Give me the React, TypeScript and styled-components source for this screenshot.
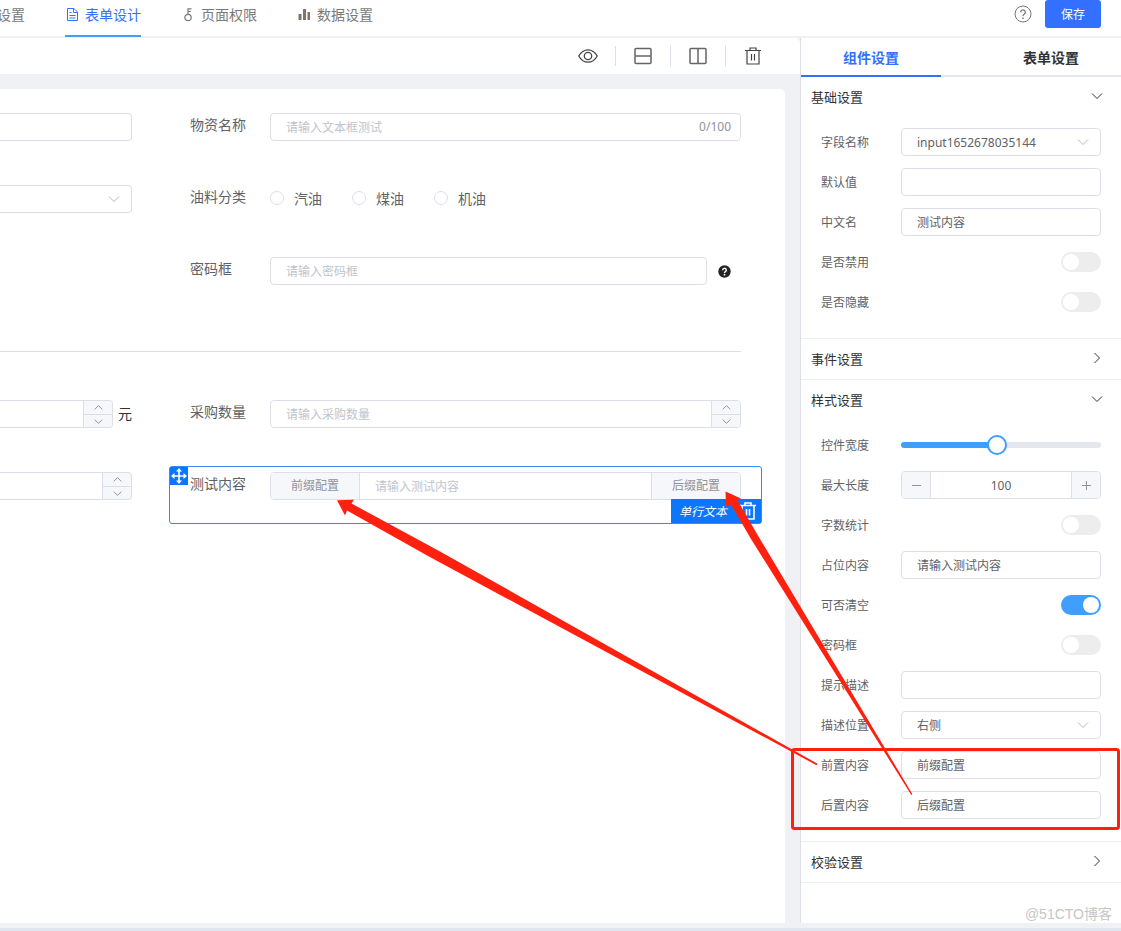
import React, { useState } from "react";
import styled, { createGlobalStyle, css } from "styled-components";

const GlobalStyle = createGlobalStyle`
  *, *::before, *::after { box-sizing: border-box; }
  body { margin: 0; background: #f0f1f5; }
  body, button, input, select {
    font-family: "Noto Sans", "Noto Sans CJK SC", sans-serif;
  }
  button { padding: 0; border: 0; background: none; cursor: pointer; }
`;

const line = "#dcdfe6";
const muted = "#909399";

const Page = styled.div`
  position: relative;
  display: flex;
  flex-direction: column;
  min-height: 100vh;
  overflow: hidden;
  color: #606266;
  font-size: 12px;
`;

/* ---------- top bar ---------- */

const TopBar = styled.header`
  display: flex;
  justify-content: space-between;
  height: 38px;
  padding-right: 20px;
  border-bottom: 2px solid #f0f1f5;
  background: #fff;
`;

const TopNav = styled.nav`
  display: flex;
  gap: 40px;
`;

const TopTab = styled.a<{ $active?: boolean; $clipped?: boolean }>`
  display: flex;
  gap: 4px;
  height: 37px;
  border-bottom: 2px solid ${(p) => (p.$active ? "#409eff" : "transparent")};
  color: ${(p) => (p.$active ? "#3370ff" : "#7a7a7a")};
  font-size: 14px;
  line-height: 30px;
  white-space: nowrap;
  text-decoration: none;
  svg { margin-top: 7px; }
  ${(p) =>
    p.$clipped &&
    css`
      justify-content: flex-end;
      width: 25px;
      overflow: hidden;
    `}
`;

const TopActions = styled.div`
  display: flex;
  gap: 13px;
`;

const HelpButton = styled.button`
  height: 28px;
  color: #777;
  svg { display: block; }
`;

const SaveButton = styled.button`
  width: 56px;
  height: 28px;
  border-radius: 3px;
  background: #3370ff;
  color: #fff;
  font-size: 12px;
`;

/* ---------- workspace ---------- */

const Workspace = styled.div`
  display: grid;
  grid-template-columns: minmax(0, 1fr) 321px;
  flex: 1;
  padding-bottom: 5px;
`;

const Main = styled.main`
  display: flex;
  flex-direction: column;
`;

const Toolbar = styled.div`
  display: flex;
  justify-content: flex-end;
  align-items: center;
  height: 36px;
  margin-bottom: 15px;
  padding-right: 20px;
  border-radius: 0 5px 0 0;
  background: #fff;
`;

const ToolButton = styled.button`
  display: flex;
  align-items: center;
  justify-content: center;
  width: 55px;
  height: 20px;
  color: #444;
  & + & { border-left: 1px solid ${line}; }
`;

const Canvas = styled.form`
  display: grid;
  grid-template-columns: 153px minmax(0, 1fr);
  column-gap: 16px;
  row-gap: 14px;
  align-content: start;
  flex: 1;
  margin-right: 15px;
  padding: 18px 23px 18px 0;
  border-radius: 0 5px 0 0;
  background: #fff;
`;

const Field = styled.div<{ $selected?: boolean; $clipped?: boolean }>`
  position: relative;
  display: flex;
  align-items: flex-start;
  height: 58px;
  padding: 5px 20px 5px ${(p) => (p.$clipped ? "0" : "20px")};
  border: 1px solid ${(p) => (p.$selected ? "#3a88ea" : "transparent")};
  border-left-width: ${(p) => (p.$clipped ? "0" : "1px")};
  border-radius: 3px;
`;

const FieldLabel = styled.label`
  flex: none;
  width: 80px;
  font-size: 14px;
  line-height: 24px;
`;

const FieldBody = styled.div`
  display: flex;
  align-items: center;
  flex: 1;
  min-width: 0;
`;

const Unit = styled.span`
  margin-left: 5px;
  color: #303133;
  font-size: 14px;
  line-height: 26px;
`;

const Hint = styled.span`
  margin: 0 10px 0 11px;
  svg { display: block; }
`;

const Divider = styled.hr`
  grid-column: 1 / -1;
  width: calc(100% - 21px);
  height: 1px;
  margin: 28px 0;
  border: 0;
  background: ${line};
`;

const Box = styled.div<{ $clipped?: boolean }>`
  display: flex;
  align-items: stretch;
  flex: 1;
  min-width: 0;
  height: 28px;
  border: 1px solid ${line};
  border-radius: 4px;
  background: #fff;
  overflow: hidden;
  ${(p) =>
    p.$clipped &&
    css`
      border-left: 0;
      border-top-left-radius: 0;
      border-bottom-left-radius: 0;
    `}
`;

const inputLook = css`
  flex: 1;
  min-width: 0;
  width: 100%;
  margin: 0;
  padding: 0 15px;
  border: 0;
  outline: 0;
  background: transparent;
  color: #606266;
  font-size: 12px;
`;

const TextInput = styled.input<{ $centered?: boolean }>`
  ${inputLook}
  text-align: ${(p) => (p.$centered ? "center" : "left")};
  &::placeholder { color: #c0c4cc; opacity: 1; }
`;

const Select = styled.select`
  ${inputLook}
  appearance: none;
`;

const SelectArrow = styled.span`
  display: flex;
  align-items: center;
  padding-right: 11px;
  color: #b4b8c0;
  pointer-events: none;
`;

const Counter = styled.span`
  padding-right: 9px;
  color: ${muted};
  line-height: 26px;
`;

const Addon = styled.span<{ $end?: boolean }>`
  padding: 0 20px;
  background: #f5f7fa;
  color: ${muted};
  line-height: 26px;
  white-space: nowrap;
  ${(p) => (p.$end ? "border-left" : "border-right")}: 1px solid ${line};
`;

const Spin = styled.div`
  display: grid;
  grid-template-rows: 1fr 1fr;
  flex: none;
  width: 29px;
  border-left: 1px solid ${line};
`;

const SpinButton = styled.button`
  display: flex;
  align-items: center;
  justify-content: center;
  background: #f5f7fa;
  color: ${muted};
  & + & { border-top: 1px solid ${line}; }
`;

const RadioGroup = styled.div`
  display: flex;
  gap: 30px;
  height: 26px;
`;

const RadioLabel = styled.label`
  display: flex;
  align-items: center;
  gap: 10px;
  font-size: 14px;
`;

const Radio = styled.input`
  appearance: none;
  width: 14px;
  height: 14px;
  margin: 0;
  border: 1px solid ${line};
  border-radius: 50%;
  background: #fff;
  &:checked { border: 4px solid #409eff; }
`;

const DragHandle = styled.button`
  position: absolute;
  top: 0;
  left: 0;
  width: 18px;
  height: 18px;
  background: #0d76ff;
  svg { display: block; }
`;

const FieldTag = styled.div`
  position: absolute;
  right: 0;
  bottom: 0;
  display: flex;
  align-items: center;
  gap: 12px;
  height: 24px;
  padding: 0 4px 0 8px;
  background: #0d76ff;
  color: #fff;
  font-style: italic;
  button { height: 18px; color: #fff; }
  svg { display: block; }
`;

/* ---------- side panel ---------- */

const Panel = styled.aside`
  position: relative;
  border-left: 1px solid ${line};
  background: #fff;
`;

const PanelTabs = styled.div`
  display: flex;
  justify-content: space-between;
  height: 39px;
  box-shadow: inset 0 -2px 0 #e4e7ed;
`;

const PanelTab = styled.button<{ $active: boolean }>`
  width: 140px;
  border-bottom: 2px solid ${(p) => (p.$active ? "#3370ff" : "transparent")};
  color: ${(p) => (p.$active ? "#3370ff" : "#303133")};
  font-size: 14px;
  font-weight: 700;
`;

const SectionBox = styled.section`
  border-bottom: 1px solid #ebeef5;
`;

const SectionHead = styled.button`
  display: flex;
  align-items: center;
  justify-content: space-between;
  width: 100%;
  height: 40px;
  padding: 0 18px 2px 10px;
  color: #303133;
  font-size: 13px;
`;

const SectionBody = styled.div`
  padding: 5px 20px 16px;
`;

const Row = styled.div`
  display: flex;
  align-items: center;
  height: 40px;
`;

const RowLabel = styled.label`
  flex: none;
  width: 80px;
`;

const Switch = styled.input`
  position: relative;
  appearance: none;
  width: 40px;
  height: 20px;
  margin: 0 0 0 auto;
  border-radius: 10px;
  background: #ededed;
  cursor: pointer;
  &::before {
    content: "";
    position: absolute;
    top: 2px;
    left: 2px;
    width: 16px;
    height: 16px;
    border-radius: 50%;
    background: #fff;
  }
  &:checked { background: #409eff; }
  &:checked::before { left: 22px; }
`;

const Slider = styled.input`
  appearance: none;
  flex: 1;
  min-width: 0;
  height: 6px;
  margin: 0;
  border-radius: 3px;
  background: linear-gradient(to right, #409eff 48%, #e4e7ed 48%);
  &::-webkit-slider-thumb {
    appearance: none;
    width: 20px;
    height: 20px;
    border: 2px solid #409eff;
    border-radius: 50%;
    background: #fff;
  }
`;

const StepButton = styled.button`
  display: flex;
  align-items: center;
  justify-content: center;
  flex: none;
  width: 29px;
  background: #f5f7fa;
  color: ${muted};
  &:first-child { border-right: 1px solid ${line}; }
  &:last-child { border-left: 1px solid ${line}; }
`;

const Watermark = styled.span`
  position: absolute;
  right: 9px;
  bottom: 0;
  color: #c6c6c6;
  font-family: "Liberation Sans", "Noto Sans CJK SC", sans-serif;
  font-size: 14px;
  line-height: 18px;
`;

const BottomEdge = styled.footer`
  height: 3px;
  background: #dfe6ef;
`;

const Annotation = styled.svg`
  position: absolute;
  top: 490px;
  right: 0;
  pointer-events: none;
`;

/* ---------- icons ---------- */

const turns = { down: 0, up: 180, right: -90 };

function Chevron({ size = 12, dir = "down" }: { size?: number; dir?: "down" | "up" | "right" }) {
  return (
    <svg width={size} height={size} viewBox="0 0 12 12" fill="none" stroke="currentColor" aria-hidden="true">
      <path d="M1 3.5 6 8.5 11 3.5" strokeWidth={12 / size} transform={`rotate(${turns[dir]} 6 6)`} />
    </svg>
  );
}

const DocIcon = () => (
  <svg width="16" height="16" viewBox="0 0 16 16" fill="none" stroke="currentColor" aria-hidden="true">
    <path d="M2.500 1.500h6.500l3.500 3.500v8.500h-10zM8.500 1.500v4h4M4.500 5.500h2M4.500 8.500h6M4.500 11h6" />
  </svg>
);

const KeyIcon = () => (
  <svg width="16" height="16" viewBox="0 0 16 16" fill="none" stroke="currentColor" strokeWidth="1.200" aria-hidden="true">
    <circle cx="7" cy="10.500" r="3.200" />
    <path d="M7 7.300V1.800h3.500M7 4.500h2.800" />
  </svg>
);

const BarsIcon = () => (
  <svg width="16" height="16" viewBox="0 0 16 16" fill="#82726a" aria-hidden="true">
    <path d="M1.500 7h3v6h-3zM6 2h3v11H6zM10.500 5h2.500v8h-2.500z" />
  </svg>
);

const QuestionIcon = () => (
  <svg width="18" height="28" viewBox="0 0 18 28" fill="none" stroke="currentColor" aria-hidden="true">
    <circle cx="9" cy="14" r="8" />
    <path d="M6.700 12.200a2.300 2.300 0 1 1 3.500 2c-.9.500-1.200.9-1.200 1.900" strokeWidth="1.300" />
    <circle cx="9" cy="18.200" r=".6" fill="currentColor" strokeWidth=".5" />
  </svg>
);

const HintIcon = () => (
  <svg width="13" height="13" viewBox="0 0 13 13" fill="none" role="img" aria-label="帮助">
    <circle cx="6.500" cy="6.500" r="6.200" fill="#222" />
    <path d="M4.700 5.200a1.800 1.800 0 1 1 2.700 1.500c-.7.400-.9.600-.9 1.200" stroke="#fff" strokeWidth="1.400" />
    <circle cx="6.500" cy="9.700" r=".9" fill="#fff" />
  </svg>
);

const EyeIcon = () => (
  <svg width="20" height="16" viewBox="0 0 20 16" fill="none" stroke="currentColor" strokeWidth="1.300" aria-hidden="true">
    <path d="M.8 8C3 4 6.200 1.800 10 1.800S17 4 19.200 8C17 12 13.800 14.200 10 14.200S3 12 .8 8z" />
    <circle cx="10" cy="8" r="3.700" />
  </svg>
);

const SplitIcon = ({ vertical }: { vertical?: boolean }) => (
  <svg width="18" height="18" viewBox="0 0 18 18" fill="none" stroke="#666" strokeWidth="1.500" aria-hidden="true">
    <rect x="1" y="1.500" width="16" height="15" rx="1" />
    <path d={vertical ? "M9 1.500v15" : "M1 9h16"} />
  </svg>
);

const TrashIcon = ({ weight = 1.2 }: { weight?: number }) => (
  <svg width="18" height="18" viewBox="0 0 18 18" fill="none" stroke="currentColor" strokeWidth={weight} aria-hidden="true">
    <path d="M1 3.500h16M6 3.500V1h6v2.500M3 3.500v13.500h12V3.500M7.500 7v6.500M10.500 7v6.500" />
  </svg>
);

const MoveIcon = () => (
  <svg width="18" height="18" viewBox="0 0 18 18" fill="#fff" aria-hidden="true">
    <path d="M9 1l3 3.500h-2.200v3.700h3.700V6L17 9l-3.500 3V9.800H9.800v3.700H12L9 17l-3-3.500h2.200V9.800H4.500V12L1 9l3.500-3v2.200h3.700V4.500H6z" />
  </svg>
);

/* ---------- composed controls ---------- */

function NumberSpin() {
  return (
    <Spin>
      <SpinButton type="button" aria-label="增加"><Chevron size={9} dir="up" /></SpinButton>
      <SpinButton type="button" aria-label="减少"><Chevron size={9} /></SpinButton>
    </Spin>
  );
}

function Section({ title, open = false, children }: { title: string; open?: boolean; children?: React.ReactNode }) {
  const [expanded, setExpanded] = useState(open);
  return (
    <SectionBox>
      <SectionHead type="button" aria-expanded={expanded} onClick={() => setExpanded(!expanded)}>
        {title}
        <Chevron dir={expanded ? "down" : "right"} />
      </SectionHead>
      {expanded && children && <SectionBody>{children}</SectionBody>}
    </SectionBox>
  );
}

function TextRow({ id, label, value = "" }: { id: string; label: string; value?: string }) {
  return (
    <Row>
      <RowLabel htmlFor={id}>{label}</RowLabel>
      <Box><TextInput id={id} defaultValue={value} /></Box>
    </Row>
  );
}

function SelectRow({ id, label, value }: { id: string; label: string; value: string }) {
  return (
    <Row>
      <RowLabel htmlFor={id}>{label}</RowLabel>
      <Box>
        <Select id={id}><option>{value}</option></Select>
        <SelectArrow><Chevron /></SelectArrow>
      </Box>
    </Row>
  );
}

function SwitchRow({ id, label, on = false }: { id: string; label: string; on?: boolean }) {
  return (
    <Row>
      <RowLabel htmlFor={id}>{label}</RowLabel>
      <Switch id={id} type="checkbox" defaultChecked={on} />
    </Row>
  );
}

export default function App() {
  const [tab, setTab] = useState("component");
  return (
    <Page>
      <GlobalStyle />
      <TopBar>
        <TopNav>
          <TopTab href="#base" $clipped>设置</TopTab>
          <TopTab href="#form" $active><DocIcon />表单设计</TopTab>
          <TopTab href="#access"><KeyIcon />页面权限</TopTab>
          <TopTab href="#data"><BarsIcon />数据设置</TopTab>
        </TopNav>
        <TopActions>
          <HelpButton type="button" aria-label="帮助"><QuestionIcon /></HelpButton>
          <SaveButton type="button">保存</SaveButton>
        </TopActions>
      </TopBar>

      <Workspace>
        <Main>
          <Toolbar>
            <ToolButton type="button" aria-label="预览"><EyeIcon /></ToolButton>
            <ToolButton type="button" aria-label="上下布局"><SplitIcon /></ToolButton>
            <ToolButton type="button" aria-label="左右布局"><SplitIcon vertical /></ToolButton>
            <ToolButton type="button" aria-label="清空"><TrashIcon /></ToolButton>
          </Toolbar>

          <Canvas>
            <Field $clipped>
              <Box $clipped><TextInput aria-label="文本" /></Box>
            </Field>
            <Field>
              <FieldLabel htmlFor="material">物资名称</FieldLabel>
              <Box>
                <TextInput id="material" placeholder="请输入文本框测试" />
                <Counter>0/100</Counter>
              </Box>
            </Field>

            <Field $clipped>
              <Box $clipped>
                <Select aria-label="选项"><option /></Select>
                <SelectArrow><Chevron /></SelectArrow>
              </Box>
            </Field>
            <Field role="radiogroup" aria-labelledby="oil-label">
              <FieldLabel as="span" id="oil-label">油料分类</FieldLabel>
              <RadioGroup>
                {["汽油", "煤油", "机油"].map((oil) => (
                  <RadioLabel key={oil}><Radio type="radio" name="oil" />{oil}</RadioLabel>
                ))}
              </RadioGroup>
            </Field>

            <Field $clipped />
            <Field>
              <FieldLabel htmlFor="password">密码框</FieldLabel>
              <FieldBody>
                <Box><TextInput id="password" type="password" placeholder="请输入密码框" /></Box>
                <Hint><HintIcon /></Hint>
              </FieldBody>
            </Field>

            <Divider />

            <Field $clipped>
              <FieldBody>
                <Box $clipped>
                  <TextInput aria-label="金额" />
                  <NumberSpin />
                </Box>
                <Unit>元</Unit>
              </FieldBody>
            </Field>
            <Field>
              <FieldLabel htmlFor="amount">采购数量</FieldLabel>
              <Box>
                <TextInput id="amount" placeholder="请输入采购数量" />
                <NumberSpin />
              </Box>
            </Field>

            <Field $clipped>
              <Box $clipped>
                <TextInput aria-label="数值" />
                <NumberSpin />
              </Box>
            </Field>
            <Field $selected>
              <DragHandle type="button" aria-label="移动"><MoveIcon /></DragHandle>
              <FieldLabel htmlFor="test">测试内容</FieldLabel>
              <Box>
                <Addon>前缀配置</Addon>
                <TextInput id="test" placeholder="请输入测试内容" />
                <Addon $end>后缀配置</Addon>
              </Box>
              <FieldTag>
                单行文本
                <button type="button" aria-label="删除"><TrashIcon weight={1.6} /></button>
              </FieldTag>
            </Field>
          </Canvas>
        </Main>

        <Panel>
          <PanelTabs role="tablist">
            <PanelTab type="button" role="tab" aria-selected={tab === "component"} $active={tab === "component"} onClick={() => setTab("component")}>
              组件设置
            </PanelTab>
            <PanelTab type="button" role="tab" aria-selected={tab === "form"} $active={tab === "form"} onClick={() => setTab("form")}>
              表单设置
            </PanelTab>
          </PanelTabs>

          <Section title="基础设置" open>
            <SelectRow id="field-name" label="字段名称" value="input1652678035144" />
            <TextRow id="default-value" label="默认值" />
            <TextRow id="title" label="中文名" value="测试内容" />
            <SwitchRow id="disabled" label="是否禁用" />
            <SwitchRow id="hidden" label="是否隐藏" />
          </Section>
          <Section title="事件设置" />
          <Section title="样式设置" open>
            <Row>
              <RowLabel htmlFor="width">控件宽度</RowLabel>
              <Slider id="width" type="range" min="0" max="100" defaultValue="48" />
            </Row>
            <Row>
              <RowLabel htmlFor="max-length">最大长度</RowLabel>
              <Box>
                <StepButton type="button" aria-label="减少">
                  <svg width="9" height="9" viewBox="0 0 9 9" stroke="currentColor"><path d="M0 4.500h9" /></svg>
                </StepButton>
                <TextInput id="max-length" defaultValue="100" $centered />
                <StepButton type="button" aria-label="增加">
                  <svg width="9" height="9" viewBox="0 0 9 9" stroke="currentColor"><path d="M0 4.500h9M4.500 0v9" /></svg>
                </StepButton>
              </Box>
            </Row>
            <SwitchRow id="word-count" label="字数统计" />
            <TextRow id="placeholder" label="占位内容" value="请输入测试内容" />
            <SwitchRow id="clearable" label="可否清空" on />
            <SwitchRow id="is-password" label="密码框" />
            <TextRow id="tip" label="提示描述" />
            <SelectRow id="tip-position" label="描述位置" value="右侧" />
            <TextRow id="prepend" label="前置内容" value="前缀配置" />
            <TextRow id="append" label="后置内容" value="后缀配置" />
          </Section>
          <Section title="校验设置" />
          <Watermark>@51CTO博客</Watermark>
        </Panel>
      </Workspace>
      <BottomEdge />

      <Annotation width="791" height="345" viewBox="330 490 791 345" fill="#ff2010" aria-hidden="true">
        <path d="M337 500.300 354 499.700 351.500 503.500 440 551.500 817.500 763.800 816.500 765.200 428 556 347 510.500 345 515.500z" />
        <path d="M725.500 491.500 741 498.500 737.500 500.500 760 539 912.300 794 911.300 795 751 539 731 504.500 726 506.500z" />
        <rect x="792.500" y="749.500" width="326" height="79" rx="2" fill="none" stroke="#ff2010" strokeWidth="3" />
      </Annotation>
    </Page>
  );
}
